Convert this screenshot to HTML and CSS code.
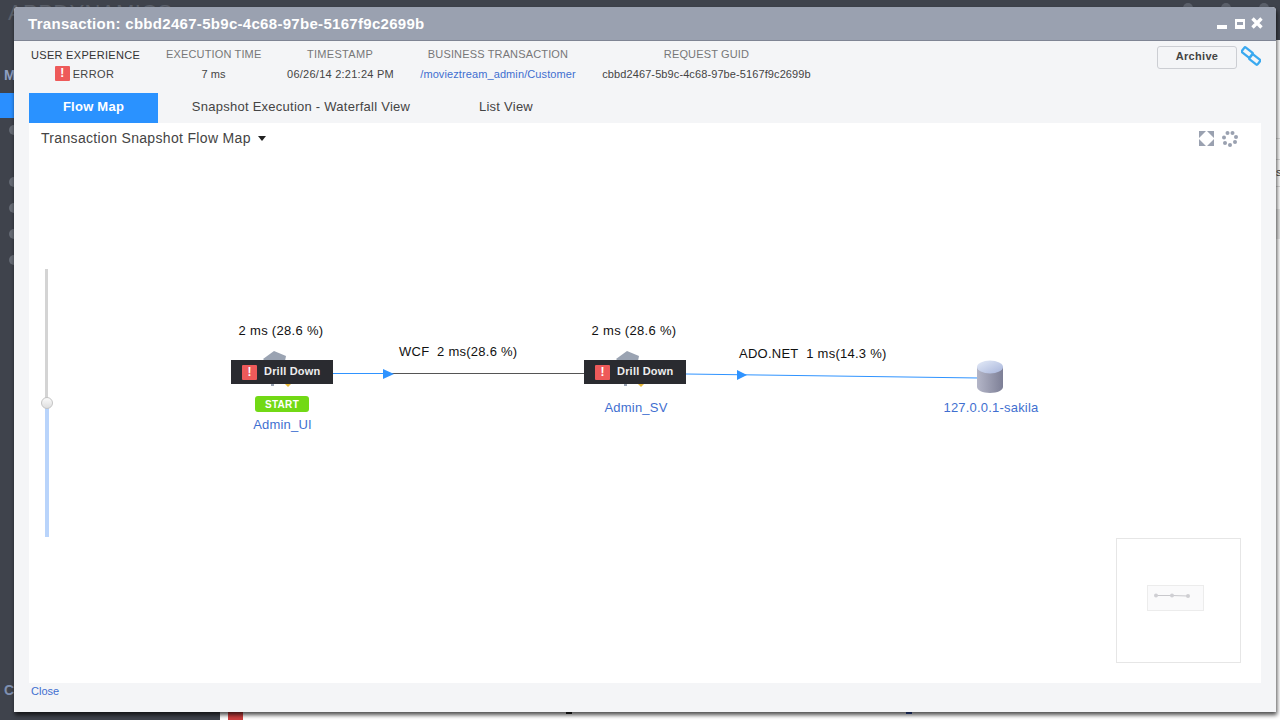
FILE: index.html
```html
<!DOCTYPE html>
<html lang="en">
<head>
    <meta charset="UTF-8">
    <meta name="viewport" content="width=device-width, initial-scale=1.0">
    <title>Transaction Snapshot</title>
    <link rel="stylesheet" href="styles.css">
</head>
<body>
    <div class="backdrop">
        <div class="bg-logo">APPDYNAMICS</div>
        <div class="bg-top-icons">
            <span class="bg-top-icon"></span>
            <span class="bg-top-icon"></span>
            <span class="bg-top-icon"></span>
        </div>
        <div class="bg-menu">
            <div class="bg-letter">M</div>
            <div class="bg-active"></div>
            <div class="bg-dot bg-dot-first"></div>
            <div class="bg-dot bg-dot-group"></div>
            <div class="bg-dot"></div>
            <div class="bg-dot"></div>
            <div class="bg-dot"></div>
            <div class="bg-letter bg-letter-low">C</div>
        </div>
        <div class="bg-side">
            <div class="bg-row bg-row-a"></div>
            <div class="bg-row bg-row-b"></div>
            <div class="bg-row bg-row-c">s</div>
            <div class="bg-row bg-row-d"></div>
        </div>
        <div class="bg-page">
            <span class="bg-flag"></span>
            <span class="bg-dash bg-dash-dark"></span>
            <span class="bg-dash bg-dash-blue"></span>
        </div>
    </div>

    <div class="dialog">
        <div class="titlebar">
            <span class="title">Transaction: cbbd2467-5b9c-4c68-97be-5167f9c2699b</span>
            <div class="window-icons">
                <svg width="10" height="12" viewBox="0 0 10 12"><rect x="0" y="8" width="10" height="4" fill="#fff"/></svg>
                <svg width="10" height="12" viewBox="0 0 10 12"><path d="M0 2h10v10H0z M2 5v3h6V5z" fill="#fff" fill-rule="evenodd"/></svg>
                <svg width="12" height="12" viewBox="0 0 12 12"><path d="M1.500 1.500l9 9M10.500 1.500l-9 9" stroke="#fff" stroke-width="3.400"/></svg>
            </div>
        </div>

        <div class="summary">
            <div class="col col-ux">
                <div class="col-head dark">USER EXPERIENCE</div>
                <div class="col-val"><span class="err-icon">!</span>ERROR</div>
            </div>
            <div class="col col-time">
                <div class="col-head">EXECUTION TIME</div>
                <div class="col-val">7 ms</div>
            </div>
            <div class="col col-stamp">
                <div class="col-head">TIMESTAMP</div>
                <div class="col-val">06/26/14 2:21:24 PM</div>
            </div>
            <div class="col col-bt">
                <div class="col-head">BUSINESS TRANSACTION</div>
                <div class="col-val link">/movieztream_admin/Customer</div>
            </div>
            <div class="col col-guid">
                <div class="col-head">REQUEST GUID</div>
                <div class="col-val">cbbd2467-5b9c-4c68-97be-5167f9c2699b</div>
            </div>
            <div class="actions">
                <button class="archive">Archive</button>
                <svg class="chain" width="20" height="20" viewBox="0 0 20 20">
                    <g fill="none" stroke="#3aa9f0" stroke-width="2.300">
                        <rect x="1" y="3.500" width="10.500" height="6" rx="1.200" transform="rotate(38 6.250 6.500)"/>
                        <rect x="8.500" y="10.500" width="10.500" height="6" rx="1.200" transform="rotate(38 13.750 13.500)"/>
                    </g>
                </svg>
            </div>
        </div>

        <div class="tabs">
            <div class="tab tab-active">Flow Map</div>
            <div class="tab tab-waterfall">Snapshot Execution - Waterfall View</div>
            <div class="tab tab-list">List View</div>
        </div>

        <div class="map-panel">
            <div class="map-head">
                <span class="map-title">Transaction Snapshot Flow Map</span>
                <span class="caret"></span>
                <div class="map-tools">
                    <svg width="15" height="15" viewBox="0 0 15 15" fill="#9aa1b0">
                        <path d="M0 0h7L0 7z M15 0v7L8 0z M0 15V8l7 7z M15 15H8l7-7z"/>
                    </svg>
                    <svg width="16" height="16" viewBox="0 0 16 16" fill="#9aa1b0">
                        <circle cx="5.500" cy="2" r="2"/><circle cx="10.500" cy="2" r="2"/>
                        <circle cx="14" cy="6" r="2"/><circle cx="13" cy="11" r="2"/>
                        <circle cx="8" cy="14" r="2"/><circle cx="3" cy="12" r="2"/>
                        <circle cx="2" cy="6.500" r="2"/>
                    </svg>
                </div>
            </div>

            <div class="zoom-slider">
                <div class="zoom-track"></div>
                <div class="zoom-fill"></div>
                <div class="zoom-knob"></div>
            </div>

            <svg class="edges" width="1232" height="560" viewBox="0 0 1232 560">
                <line x1="304" y1="250.500" x2="360" y2="250.500" stroke="#2f93ff" stroke-width="1"/>
                <line x1="360" y1="250.500" x2="556" y2="250.500" stroke="#555" stroke-width="1"/>
                <path d="M354 246l11 5-11 5z" fill="#2f93ff"/>
                <line x1="657" y1="251" x2="950" y2="255" stroke="#2f93ff" stroke-width="1"/>
                <path d="M708 247l10 5-10 5z" fill="#2f93ff"/>
            </svg>

            <div class="edge-label edge-wcf">WCF&nbsp; 2 ms(28.6 %)</div>
            <div class="edge-label edge-ado">ADO.NET&nbsp; 1 ms(14.3 %)</div>

            <div class="node node-ui">
                <div class="node-time">2 ms (28.6 %)</div>
                <div class="node-body">
                    <svg class="node-shape" width="32" height="36" viewBox="0 0 32 36">
                        <path d="M3 8L14 0 26 5 25 10H5z" fill="#9aa3b2"/>
                        <path d="M11 33h3v2h-3z" fill="#9aa3b2"/>
                        <path d="M25 33h6l-3 3z" fill="#e8b93a"/>
                    </svg>
                    <div class="drill"><span class="err-icon">!</span>Drill Down</div>
                </div>
                <div class="start">START</div>
                <div class="node-name">Admin_UI</div>
            </div>

            <div class="node node-sv">
                <div class="node-time">2 ms (28.6 %)</div>
                <div class="node-body">
                    <svg class="node-shape" width="32" height="36" viewBox="0 0 32 36">
                        <path d="M3 8L14 0 26 5 25 10H5z" fill="#9aa3b2"/>
                        <path d="M11 33h3v2h-3z" fill="#9aa3b2"/>
                        <path d="M25 33h6l-3 3z" fill="#e8b93a"/>
                    </svg>
                    <div class="drill"><span class="err-icon">!</span>Drill Down</div>
                </div>
                <div class="node-name">Admin_SV</div>
            </div>

            <div class="db">
                <svg width="30" height="36" viewBox="0 0 30 36">
                    <defs>
                        <linearGradient id="dbSide" x1="0" x2="1" y1="0" y2="0">
                            <stop offset="0" stop-color="#b4b6c8"/>
                            <stop offset="1" stop-color="#7d7f96"/>
                        </linearGradient>
                        <linearGradient id="dbTop" x1="0" x2="1" y1="0" y2="1">
                            <stop offset="0" stop-color="#e4ebf8"/>
                            <stop offset="1" stop-color="#a7b4da"/>
                        </linearGradient>
                    </defs>
                    <path d="M2 8v20c0 3 5.500 6 13 6s13-3 13-6V8z" fill="url(#dbSide)"/>
                    <ellipse cx="15" cy="8" rx="13" ry="6.500" fill="url(#dbTop)"/>
                </svg>
                <div class="node-name">127.0.0.1-sakila</div>
            </div>

            <div class="overview">
                <div class="overview-view">
                    <svg width="56" height="25" viewBox="0 0 56 25">
                        <path d="M8 9.500L24 9.500 40 10" stroke="#c8c8cc" stroke-width="1" fill="none"/>
                        <circle cx="8" cy="9.500" r="2" fill="#cfcfd3"/>
                        <circle cx="24" cy="9.500" r="2" fill="#cfcfd3"/>
                        <circle cx="40" cy="10" r="2" fill="#cfcfd3"/>
                    </svg>
                </div>
            </div>
        </div>

        <div class="dialog-foot"><span class="link">Close</span></div>
    </div>
</body>
</html>
```

FILE: styles.css
```css
html, body {
    margin: 0;
    height: 720px;
    overflow: hidden;
}
body {
    font-family: "Liberation Sans", Arial, sans-serif;
    background: #3f434c;
    position: relative;
}

/* page behind the dialog */
.backdrop {
    position: absolute;
    inset: 0;
}
.bg-logo {
    position: absolute;
    left: 8px;
    top: 0;
    font-size: 22px;
    letter-spacing: 0.4px;
    color: #5b606a;
}
.bg-top-icons {
    position: absolute;
    left: 1183px;
    top: 3px;
    display: flex;
    gap: 28px;
}
.bg-top-icon {
    width: 10px;
    height: 10px;
    border-radius: 50%;
    background: #5b606a;
}
.bg-menu {
    width: 15px;
    padding-top: 67px;
}
.bg-letter {
    font-size: 14px;
    font-weight: bold;
    color: #8e9fc0;
    padding-left: 4px;
    height: 26px;
}
.bg-active {
    height: 25px;
    background: #2a8fff;
}
.bg-dot {
    width: 10px;
    height: 10px;
    border-radius: 50%;
    background: #666b75;
    margin: 16px 0 0 9px;
}
.bg-dot-first {
    margin-top: 7px;
}
.bg-dot-group {
    margin-top: 42px;
}
.bg-letter-low {
    margin-top: 417px;
    color: #7f90b0;
}
.bg-side {
    position: absolute;
    left: 1276px;
    top: 40px;
    width: 4px;
    height: 672px;
    background: #fff;
    font-size: 11px;
    color: #444;
    overflow: hidden;
}
.bg-row {
    border-bottom: 1px solid #ddd;
    box-sizing: border-box;
}
.bg-row-a {
    height: 99px;
}
.bg-row-b {
    height: 21px;
}
.bg-row-c {
    height: 27px;
    padding-top: 5px;
    line-height: 14px;
}
.bg-row-d {
    height: 52px;
    margin-top: 0;
    border-bottom: 30px solid #e8e8e8;
}
.bg-page {
    position: absolute;
    left: 220px;
    right: 0;
    bottom: 0;
    height: 8px;
    background: #fff;
}
.bg-flag {
    position: absolute;
    left: 8px;
    top: 0;
    width: 15px;
    height: 8px;
    background: #cc3f3f;
}
.bg-dash {
    position: absolute;
    top: 0;
    width: 6px;
    height: 2px;
}
.bg-dash-dark {
    left: 346px;
    background: #222;
}
.bg-dash-blue {
    left: 686px;
    background: #2f4fa8;
}

/* dialog */
.dialog {
    position: absolute;
    left: 14px;
    top: 7px;
    width: 1262px;
    height: 705px;
    background: #f4f5f7;
    border-radius: 4px 4px 0 0;
    box-shadow: 1px 3px 4px rgba(0, 0, 0, 0.7);
    display: flex;
    flex-direction: column;
}
.titlebar {
    height: 33px;
    flex-shrink: 0;
    background: #9aa1b0;
    border-bottom: 1px solid #7f8594;
    border-radius: 4px 4px 0 0;
    display: flex;
    align-items: center;
    justify-content: space-between;
    padding: 0 13px 0 14px;
}
.title {
    color: #fff;
    font-size: 15px;
    font-weight: bold;
    letter-spacing: 0.3px;
}
.window-icons {
    display: flex;
    align-items: center;
    gap: 6px;
    margin-bottom: 1px;
}
.window-icons svg:first-child {
    margin-right: 2px;
}

.summary {
    height: 52px;
    flex-shrink: 0;
    position: relative;
    display: flex;
    font-size: 11px;
    color: #444;
    white-space: nowrap;
}
.col {
    text-align: center;
    padding-top: 7px;
    flex-shrink: 0;
}
.col-head {
    color: #777;
    line-height: 13px;
    letter-spacing: 0.15px;
}
.col-head.dark {
    color: #333;
    padding-top: 1px;
    letter-spacing: 0.3px;
}
.col-val {
    margin-top: 6px;
    line-height: 14px;
    letter-spacing: 0.1px;
}
.col-ux {
    margin-left: 17px;
    width: 109px;
}
.col-ux .col-val {
    margin-top: 4px;
    display: flex;
    justify-content: center;
    align-items: center;
    padding-right: 2px;
    letter-spacing: 0.4px;
}
.col-time {
    margin-left: 26px;
    width: 95px;
}
.col-stamp {
    margin-left: 25px;
    width: 108px;
}
.col-stamp .col-head {
    letter-spacing: 0.3px;
}
.col-stamp .col-val {
    letter-spacing: 0.25px;
    padding-left: 1px;
}
.col-bt {
    margin-left: 26px;
    width: 156px;
}
.col-guid {
    margin-left: 26px;
    width: 209px;
}
.link {
    color: #3f6fd0;
}
.err-icon {
    display: inline-block;
    width: 15px;
    height: 15px;
    line-height: 15px;
    text-align: center;
    background: #ee5a5a;
    color: #fff;
    font-size: 12px;
    font-weight: bold;
    letter-spacing: 0;
    border-radius: 1px;
    margin-right: 3px;
}
.actions {
    position: absolute;
    right: 15px;
    top: 5px;
    display: flex;
    align-items: flex-start;
    gap: 4px;
}
.archive {
    width: 80px;
    height: 23px;
    border: 1px solid #ccced3;
    border-radius: 3px;
    background: #f4f5f7;
    color: #444;
    font-family: inherit;
    font-size: 11px;
    font-weight: bold;
    letter-spacing: 0.3px;
    padding: 0 0 3px;
}

.tabs {
    display: flex;
    height: 30px;
    flex-shrink: 0;
    margin-left: 15px;
    font-size: 13px;
    color: #444;
    letter-spacing: 0.25px;
}
.tab {
    line-height: 27px;
    text-align: center;
}
.tab-active {
    width: 129px;
    background: #2a92ff;
    color: #fff;
    font-weight: bold;
}
.tab-waterfall {
    width: 286px;
}
.tab-list {
    width: 124px;
}

/* flow map */
.map-panel {
    position: relative;
    height: 560px;
    flex-shrink: 0;
    margin: 0 15px;
    background: #fff;
}
.map-head {
    display: flex;
    align-items: center;
    height: 30px;
    padding-left: 12px;
}
.map-title {
    font-size: 14px;
    color: #444;
    letter-spacing: 0.33px;
}
.caret {
    margin-left: 7px;
    border-left: 4px solid transparent;
    border-right: 4px solid transparent;
    border-top: 5px solid #222;
}
.map-tools {
    position: absolute;
    right: 23px;
    top: 8px;
    display: flex;
    gap: 8px;
}
.zoom-slider {
    position: absolute;
    left: 16px;
    top: 146px;
    width: 4px;
    height: 268px;
}
.zoom-track {
    width: 3px;
    height: 134px;
    background: #d4d4d4;
}
.zoom-fill {
    height: 134px;
    background: #b9d4fb;
}
.zoom-knob {
    position: absolute;
    left: -4px;
    top: 128px;
    width: 10px;
    height: 10px;
    border-radius: 50%;
    border: 1px solid #c4c4c4;
    background: linear-gradient(#fafafa, #dedede);
}
.edges {
    position: absolute;
    left: 0;
    top: 0;
}
.edge-label {
    position: absolute;
    font-size: 13px;
    letter-spacing: 0.25px;
    color: #111;
    white-space: nowrap;
}
.edge-wcf {
    left: 370px;
    top: 221px;
}
.edge-ado {
    left: 710px;
    top: 223px;
}
.node {
    position: absolute;
    top: 200px;
    width: 120px;
    text-align: center;
}
.node-ui {
    left: 194px;
}
.node-sv {
    left: 547px;
}
.node-time {
    font-size: 13px;
    letter-spacing: 0.3px;
    color: #111;
    line-height: 16px;
    padding-right: 4px;
    white-space: nowrap;
}
.node-body {
    position: relative;
    height: 45px;
    margin-top: 12px;
}
.node-shape {
    position: absolute;
    left: 37px;
    top: 0;
}
.drill {
    position: absolute;
    left: 8px;
    top: 9px;
    width: 102px;
    height: 24px;
    box-sizing: border-box;
    background: #2a2b30;
    color: #eee;
    font-size: 11px;
    font-weight: bold;
    letter-spacing: 0.2px;
    display: flex;
    align-items: center;
    padding: 0 0 2px 11px;
}
.drill .err-icon {
    margin: 2px 7px 0 0;
}
.start {
    width: 54px;
    height: 16px;
    line-height: 17px;
    margin-left: 32px;
    background: #72d915;
    border-radius: 3px;
    color: #fff;
    font-size: 10px;
    font-weight: bold;
    letter-spacing: 0.3px;
}
.node-name {
    font-size: 13px;
    letter-spacing: 0.2px;
    color: #3f6fd0;
    line-height: 14px;
    margin-top: 5px;
}
.node-ui .node-name {
    margin-top: 6px;
    padding-right: 1px;
}
.db {
    position: absolute;
    left: 902px;
    top: 236px;
    width: 120px;
    text-align: center;
}
.db svg {
    display: block;
    margin: 0 auto 0 44px;
}
.db .node-name {
    margin-top: 6px;
}
.overview {
    position: absolute;
    left: 1087px;
    top: 415px;
    width: 125px;
    height: 125px;
    box-sizing: border-box;
    border: 1px solid #e6e6e6;
}
.overview-view {
    position: absolute;
    left: 30px;
    top: 46px;
    width: 57px;
    height: 26px;
    box-sizing: border-box;
    border: 1px solid #ececec;
    background: #fafafb;
}
.overview-view svg {
    display: block;
}
.dialog-foot {
    font-size: 11px;
    padding: 2px 0 0 17px;
}
```
